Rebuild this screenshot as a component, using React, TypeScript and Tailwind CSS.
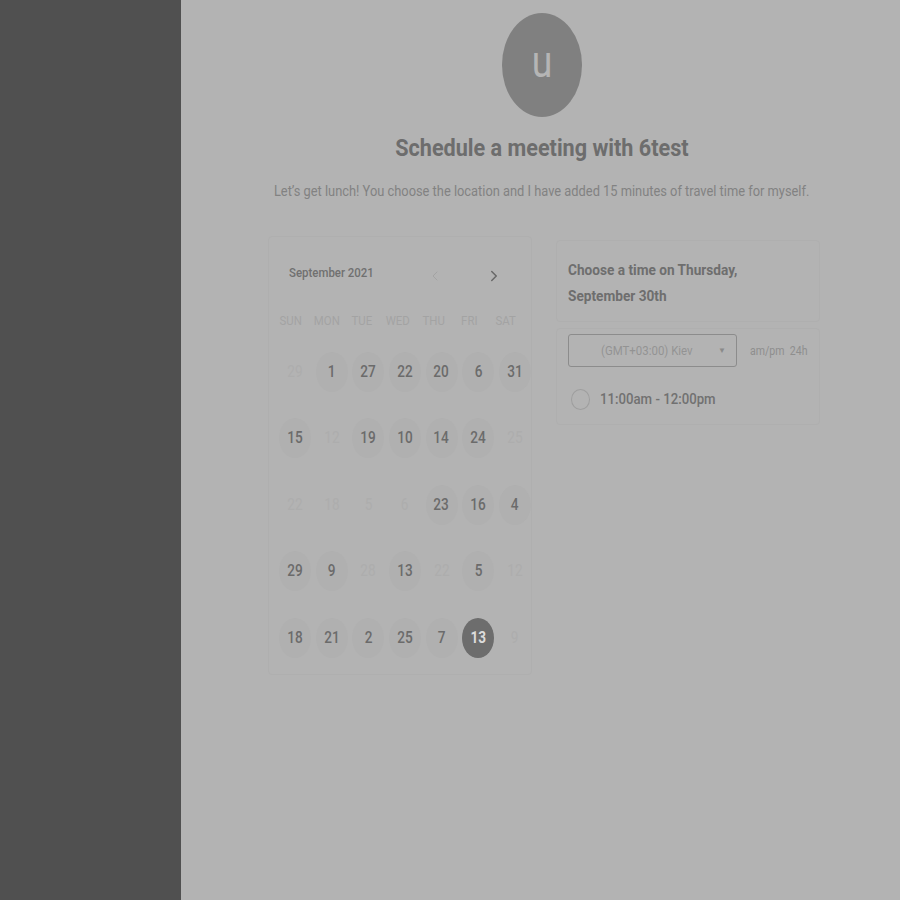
import { ChevronLeft, ChevronRight } from 'lucide-react';

type Day = { n: number; on?: boolean; faint?: boolean; sel?: boolean };

const rows: Day[][] = [
  [{ n: 29, faint: true }, { n: 1, on: true }, { n: 27, on: true }, { n: 22, on: true }, { n: 20, on: true }, { n: 6, on: true }, { n: 31, on: true }],
  [{ n: 15, on: true }, { n: 12, faint: true }, { n: 19, on: true }, { n: 10, on: true }, { n: 14, on: true }, { n: 24, on: true }, { n: 25, faint: true }],
  [{ n: 22, faint: true }, { n: 18, faint: true }, { n: 5, faint: true }, { n: 6, faint: true }, { n: 23, on: true }, { n: 16, on: true }, { n: 4, on: true }],
  [{ n: 29, on: true }, { n: 9, on: true }, { n: 28, faint: true }, { n: 13, on: true }, { n: 22, faint: true }, { n: 5, on: true }, { n: 12, faint: true }],
  [{ n: 18, on: true }, { n: 21, on: true }, { n: 2, on: true }, { n: 25, on: true }, { n: 7, on: true }, { n: 13, sel: true }, { n: 9, faint: true }],
];

const weekdays = ['SUN', 'MON', 'TUE', 'WED', 'THU', 'FRI', 'SAT'];

function DayCell({ d }: { d: Day }) {
  let cls = 'text-[#adadad]';
  if (d.on) cls = 'bg-[#b0b0b0] text-[#6b6b6b] font-medium';
  if (d.sel) cls = 'bg-[#6d6d6d] text-[#dcdcdc] font-bold';
  return (
    <div className="flex items-center justify-center h-[66.5px]">
      <div className={`w-[32px] h-[40px] rounded-[50%] flex items-center justify-center text-[16px] ${cls}`}>
        <span className="inline-block scale-x-[0.85]">{d.n}</span>
      </div>
    </div>
  );
}

export default function App() {
  return (
    <div className="flex w-[900px] h-[900px] overflow-hidden" style={{ fontFamily: 'Roboto, "Noto Sans", sans-serif' }}>
      <div className="w-[181px] shrink-0 bg-[#505050]" />
      <div className="flex-1 bg-[#b3b3b3] flex flex-col items-center pl-[3px]">
        <div className="mt-[13px] w-[80px] h-[104px] rounded-[50%] bg-[#808080] flex items-center justify-center">
          <span className="text-[44px] leading-none text-[#b5b5b5] inline-block scale-x-[0.85] -mt-[6px]">u</span>
        </div>
        <h1 className="mt-[16px] text-[24px] leading-[30px] font-bold text-[#6d6d6d] whitespace-nowrap">
          <span className="inline-block scale-x-[0.9]">Schedule a meeting with 6test</span>
        </h1>
        <p className="mt-[18px] text-[14px] leading-[20px] text-[#828282] whitespace-nowrap">
          <span className="inline-block scale-x-[0.918]">Let’s get lunch! You choose the location and I have added 15 minutes of travel time for myself.</span>
        </p>

        <div className="mt-[35px] ml-[4px] w-[552px] flex gap-[24px] items-start">
          <div className="w-[264px] h-[439px] shrink-0 border border-[#afafaf] rounded-sm pl-[8px] pt-[24px]">
            <div className="flex items-center justify-between pl-[12px] pr-[28px]">
              <span className="text-[13px] font-medium text-[#707070] inline-block scale-x-[0.88] origin-left">September 2021</span>
              <div className="flex items-center gap-[42px] mt-[6px]">
                <ChevronLeft size={16} strokeWidth={1.5} className="text-[#a3a3a3]" />
                <ChevronRight size={18} strokeWidth={2} className="text-[#686868]" />
              </div>
            </div>
            <div className="grid grid-cols-7 w-[250px] mt-[26px] -ml-[4px]">
              {weekdays.map((w) => (
                <div key={w} className="text-center text-[13px] text-[#a3a3a3]">
                  <span className="inline-block scale-x-[0.88]">{w}</span>
                </div>
              ))}
            </div>
            <div className="grid grid-cols-7 w-[256px] mt-[8px]">
              {rows.flat().map((d, i) => (
                <DayCell key={i} d={d} />
              ))}
            </div>
          </div>

          <div className="w-[264px] shrink-0 mt-[4px] flex flex-col">
            <div className="h-[82px] border border-[#afafaf] rounded-sm px-[11px] pt-[16px]">
              <div className="text-[15.5px] leading-[26px] font-bold text-[#6e6e6e]">
                <span className="inline-block scale-x-[0.88] origin-left whitespace-nowrap">Choose a time on Thursday,</span>
                <br />
                <span className="inline-block scale-x-[0.88] origin-left whitespace-nowrap">September 30th</span>
              </div>
            </div>
            <div className="mt-[6px] h-[97px] border border-[#afafaf] rounded-sm px-[11px] pt-[5px]">
              <div className="flex items-center">
                <div className="w-[169px] shrink-0 h-[33px] border border-[#8c8c8c] rounded-[3px] flex items-center pl-[32px] pr-[10px] justify-between">
                  <span className="text-[13px] text-[#939393] inline-block scale-x-[0.88] origin-left whitespace-nowrap">(GMT+03:00) Kiev</span>
                  <span className="text-[8px] text-[#8a8a8a]">▼</span>
                </div>
                <span className="ml-[13px] text-[12px] text-[#8e8e8e] inline-block scale-x-[0.88] origin-left whitespace-nowrap">am/pm&nbsp;&nbsp;24h</span>
              </div>
              <div className="flex items-center mt-[21px]">
                <div className="w-[19px] h-[21px] rounded-[50%] border border-[#9e9e9e] ml-[3px]" />
                <span className="ml-[10px] text-[15px] font-medium text-[#717171] inline-block scale-x-[0.88] origin-left whitespace-nowrap">11:00am - 12:00pm</span>
              </div>
            </div>
          </div>
        </div>
      </div>
    </div>
  );
}
